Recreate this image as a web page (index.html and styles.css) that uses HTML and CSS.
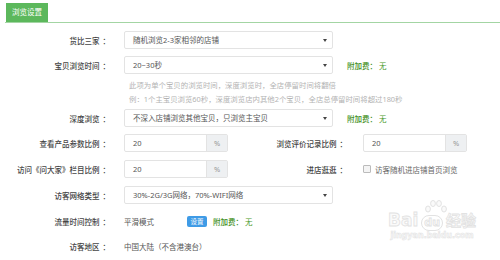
FILE: index.html
```html
<!DOCTYPE html>
<html>
<head>
  <title>浏览设置</title>
  <link rel="stylesheet" href="styles.css">
</head>
<body>

  <div class="panel">
    <div class="tabs">
      <div class="tab">浏览设置</div>
    </div>

    <div class="form">
      <div class="row">
        <div class="label">货比三家<span class="colon">：</span></div>
        <div class="select">随机浏览2-3家相邻的店铺<span class="caret"></span></div>
      </div>

      <div class="row">
        <div class="label">宝贝浏览时间<span class="colon">：</span></div>
        <div class="select">20~30秒<span class="caret"></span></div>
        <div class="fee"><b>附加费：</b> 无</div>
      </div>

      <div class="help">
        <p>此项为单个宝贝的浏览时间，深度浏览时，全店停留时间将翻倍</p>
        <p>例：1个主宝贝浏览60秒，深度浏览店内其他2个宝贝，全店总停留时间将超过180秒</p>
      </div>

      <div class="row">
        <div class="label">深度浏览<span class="colon">：</span></div>
        <div class="select">不深入店铺浏览其他宝贝，只浏览主宝贝<span class="caret"></span></div>
        <div class="fee"><b>附加费：</b> 无</div>
      </div>

      <div class="row pair">
        <div class="half">
          <div class="label">查看产品参数比例<span class="colon">：</span></div>
          <div class="group"><div class="input">20</div><div class="addon">%</div></div>
        </div>
        <div class="half right">
          <div class="label">浏览评价记录比例<span class="colon">：</span></div>
          <div class="group"><div class="input">20</div><div class="addon">%</div></div>
        </div>
      </div>

      <div class="row pair">
        <div class="half">
          <div class="label">访问《问大家》栏目比例<span class="colon">：</span></div>
          <div class="group"><div class="input">20</div><div class="addon">%</div></div>
        </div>
        <div class="half right">
          <div class="label">进店逛逛<span class="colon">：</span></div>
          <label class="check"><span class="box"></span>访客随机进店铺首页浏览</label>
        </div>
      </div>

      <div class="row net">
        <div class="label">访客网络类型<span class="colon">：</span></div>
        <div class="select">30%-2G/3G网络，70%-WIFI网络<span class="caret"></span></div>
      </div>

      <div class="row">
        <div class="label">流量时间控制<span class="colon">：</span></div>
        <div class="plain">平滑模式</div>
        <button class="btn">设置</button>
        <div class="fee near"><b>附加费：</b> 无</div>
      </div>

      <div class="row">
        <div class="label">访客地区<span class="colon">：</span></div>
        <div class="plain">中国大陆（不含港澳台）</div>
      </div>
    </div>

    <div class="watermark">
      <div class="logo">
        <svg class="paw" width="24" height="16" viewBox="0 0 24 16">
          <g fill="#fafafa" stroke="#e2e2e2" stroke-width="1">
            <ellipse cx="4" cy="10" rx="2.4" ry="3"/>
            <ellipse cx="9" cy="4.5" rx="2.4" ry="3"/>
            <ellipse cx="15" cy="4.5" rx="2.4" ry="3"/>
            <ellipse cx="20" cy="10" rx="2.4" ry="3"/>
          </g>
        </svg>
        <span>Bai</span><span class="du">du</span><span class="jy">经验</span>
      </div>
      <div class="url">jingyan.baidu.com</div>
    </div>
  </div>

</body>
</html>
```
FILE: styles.css
```css
body {
  margin: 0;
  background: #fff;
  font-family: "Noto Sans", "Noto Sans CJK SC", sans-serif;
  font-size: 7.5px;
  color: #555;
}

.panel {
  position: relative;
  width: 500px;
  height: 260px;
  padding: 3px 0 0 5px;
  box-sizing: border-box;
}

.tabs {
  border-bottom: 1px solid #a3d5a3;
  height: 19px;
  padding-left: 1px;
}

.tab {
  display: inline-block;
  height: 19px;
  line-height: 19px;
  padding: 0 6px;
  background: #5cb85c;
  color: #fff;
}

.form {
  padding-top: 8px;
}

.row {
  display: flex;
  align-items: center;
  height: 18px;
  margin-bottom: 7px;
}

.label {
  width: 105px;
  flex-shrink: 0;
  margin-right: 14px;
  text-align: right;
  color: #444;
  font-weight: 500;
  white-space: nowrap;
}

.colon {
  margin-left: 3px;
}

.select {
  position: relative;
  width: 209px;
  height: 18px;
  line-height: 17px;
  padding-left: 8px;
  box-sizing: border-box;
  border: 1px solid #e3e3e3;
  border-radius: 2px;
  color: #555;
}

.caret {
  position: absolute;
  right: 5px;
  top: 7px;
  border-left: 2px solid transparent;
  border-right: 2px solid transparent;
  border-top: 3px solid #444;
}

.fee {
  margin-left: 14px;
  color: #4c9a2a;
}

.fee b {
  color: #3e8e1c;
  font-weight: 500;
}

.fee.near {
  margin-left: 6px;
}

.help {
  margin: -3px 0 3px 124px;
  color: #b3b3b3;
  font-size: 7.4px;
}

.help p {
  margin: 0;
  line-height: 14px;
}

.pair {
  margin-bottom: 8px;
}

.half {
  display: flex;
  align-items: center;
  width: 240px;
}

.half.right .label {
  width: 102px;
  margin-right: 16px;
}

.group {
  display: flex;
  width: 104px;
  height: 18px;
  border: 1px solid #e3e3e3;
  border-radius: 2px;
  box-sizing: border-box;
}

.input {
  flex: 1;
  line-height: 16px;
  padding-left: 8px;
}

.addon {
  width: 20px;
  text-align: center;
  line-height: 16px;
  background: #eef0f2;
  border-left: 1px solid #e3e3e3;
  color: #999;
}

.check {
  display: flex;
  align-items: center;
  color: #666;
}

.box {
  width: 6px;
  height: 6px;
  margin-right: 4px;
  border: 1px solid #bbb;
  border-radius: 1px;
  background: #f4f4f4;
}

.net {
  margin-top: 2px;
  margin-bottom: 8px;
}

.plain {
  color: #555;
}

.btn {
  margin-left: 33px;
  width: 20px;
  height: 11px;
  padding: 0;
  border: none;
  border-radius: 2px;
  background: #3f9be6;
  color: #fff;
  font-family: inherit;
  font-size: 6.5px;
  line-height: 11px;
}

.watermark {
  position: absolute;
  left: 388px;
  top: 210px;
  text-align: center;
}

.logo {
  position: relative;
  font-family: "DejaVu Sans", sans-serif;
  font-size: 17px;
  font-weight: bold;
  line-height: 20px;
  color: #fafafa;
  -webkit-text-stroke: 0.8px #e2e2e2;
}

.paw {
  position: absolute;
  left: 36px;
  top: -11px;
}

.du {
  display: inline-block;
  font-size: 11px;
  margin: 0 3px;
  padding: 0 2px;
  border: 1px solid #e2e2e2;
  border-radius: 8px;
  line-height: 14px;
}

.jy {
  font-family: "Noto Sans CJK SC", sans-serif;
  font-size: 15px;
}

.url {
  font-family: "DejaVu Sans", sans-serif;
  font-size: 8px;
  font-weight: bold;
  color: #fafafa;
  -webkit-text-stroke: 0.5px #e2e2e2;
}
```
